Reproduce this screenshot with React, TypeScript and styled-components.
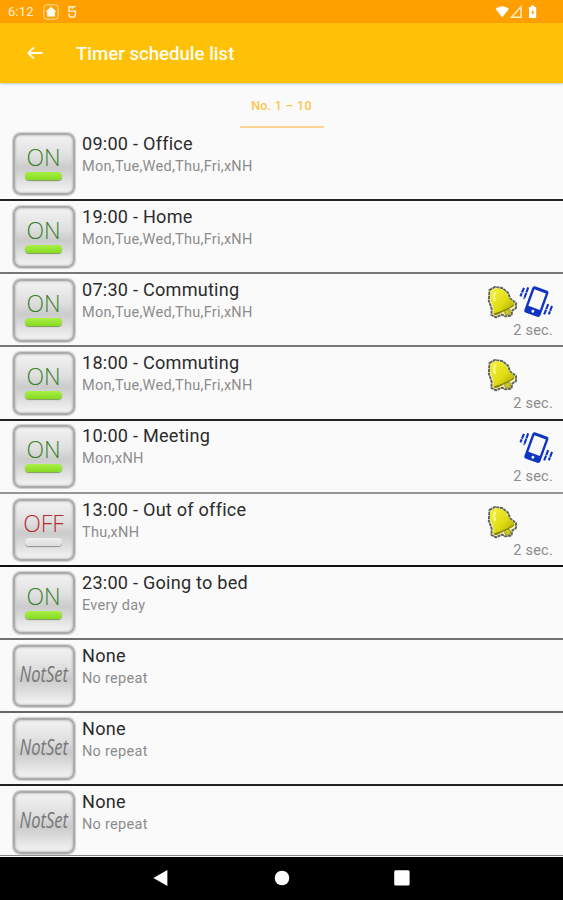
import React from "react";
import styled, { createGlobalStyle } from "styled-components";

const GlobalStyle = createGlobalStyle`
  * { box-sizing: border-box; }
  html, body { margin: 0; padding: 0; background: #fafafa; }
`;

const Screen = styled.div`
  width: 563px;
  height: 900px;
  display: flex;
  flex-direction: column;
  overflow: hidden;
  background: #fafafa;
  font-family: Roboto, sans-serif;
`;

const StatusBar = styled.header`
  flex: none;
  height: 23px;
  padding: 1px 25px 0 8px;
  display: flex;
  align-items: center;
  justify-content: space-between;
  background: #ffa000;
  color: #fff3dc;
`;

const StatusGroup = styled.div`
  display: flex;
  align-items: center;
  gap: 8px;
`;

const Clock = styled.span`
  width: 27px;
  font-size: 13px;
  line-height: 22px;
  letter-spacing: 0.2px;
`;

const AppBar = styled.div`
  flex: none;
  height: 60px;
  padding: 0 0 0 25px;
  display: flex;
  align-items: center;
  background: #ffc107;
  box-shadow: 0 1px 2px rgba(0, 0, 0, 0.22);
  color: #fffdf0;
`;

const Title = styled.h1`
  margin: 2px 0 0 31px;
  font-size: 18.6px;
  font-weight: 500;
  line-height: 24px;
`;

const TabStrip = styled.nav`
  flex: none;
  height: 45px;
  display: flex;
  justify-content: center;
`;

const Tab = styled.div`
  width: 84px;
  height: 45px;
  padding-top: 14px;
  border-bottom: 2px solid #ffd494;
  text-align: center;
  white-space: nowrap;
  font-size: 12.4px;
  font-weight: 500;
  line-height: 18px;
  letter-spacing: 0.3px;
  color: #fcc54a;
`;

const List = styled.ul`
  flex: none;
  height: 728.5px;
  margin: 0;
  padding: 0;
  list-style: none;
`;

const Row = styled.li<{ $line: string }>`
  height: 73.15px;
  padding: 4.8px 10px 0 12.5px;
  display: flex;
  border-bottom: 2px solid ${(p) => p.$line};

  &:last-child {
    height: 70.2px;
    border-bottom-width: 1px;
  }
`;

const StateButton = styled.button`
  flex: none;
  width: 62px;
  height: 62.5px;
  padding: 0;
  border: 2.5px solid #ababab;
  border-radius: 8px;
  display: flex;
  flex-direction: column;
  align-items: center;
  background: linear-gradient(#f3f3f3 0%, #dedede 38%, #cbcbcb 56%, #dcdcdc 75%, #f5f5f5 100%);
  box-shadow: 0 0 1px 0.5px #cccccc, inset 0 0 2px 1px #c8c8c8;
`;

const StateText = styled.span<{ $on: boolean }>`
  margin-top: 7px;
  height: 30px;
  font-family: "Open Sans", sans-serif;
  font-weight: 300;
  font-size: 23px;
  line-height: 31px;
  color: ${(p) => (p.$on ? "#39802a" : "#b52b2b")};
`;

const Lamp = styled.span<{ $on: boolean }>`
  width: 37px;
  height: 8px;
  border-radius: 4px;
  background: ${(p) => (p.$on ? "linear-gradient(#a9f046, #86da22)" : "linear-gradient(#eeeeee, #dddddd)")};
  box-shadow: 0 1px 1px ${(p) => (p.$on ? "#7d9d58" : "#8e8e8e")};
`;

const NotSetText = styled.span`
  margin-top: 14px;
  font-family: "Open Sans", sans-serif;
  font-style: italic;
  font-size: 21px;
  line-height: 26px;
  color: #777;
  transform: scaleX(0.79);
`;

const Details = styled.div`
  flex: 1;
  padding-left: 7.5px;
  white-space: nowrap;
`;

const Name = styled.div`
  font-size: 18.1px;
  line-height: 22px;
  letter-spacing: 0.24px;
  color: #2b2b2b;
`;

const Days = styled.div`
  font-size: 14.5px;
  line-height: 24px;
  letter-spacing: 0.28px;
  color: #8c8c8c;
`;

const Alerts = styled.div`
  width: 70px;
  padding-top: 5px;
`;

const AlertIcons = styled.div`
  height: 36px;
  display: flex;
  justify-content: space-between;
`;

const IconSlot = styled.span`
  width: 35px;
  height: 36px;
  display: block;
`;

const Duration = styled.div`
  text-align: right;
  font-size: 14.5px;
  line-height: 22px;
  letter-spacing: 0.25px;
  color: #8c8c8c;
`;

const NavBar = styled.footer`
  flex: 1;
  display: flex;
  justify-content: center;
  align-items: center;
  gap: 96.5px;
  background: #000;
`;

const HomeBadge = () => (
  <svg width="16" height="16" viewBox="0 0 16 16">
    <rect x="0.8" y="0.8" width="14.4" height="14.4" rx="3" fill="none" stroke="#ffe0a5" strokeWidth="1" />
    <path d="M8 3 12.9 7.4H11.6V12.2H4.4V7.4H3.1Z" fill="#fffaf0" stroke="#fffaf0" strokeWidth="0.8" strokeLinejoin="round" />
  </svg>
);

const SyncMark = () => (
  <svg width="11" height="14" viewBox="0 0 11 14">
    <path d="M8.6 1.8H2V6.2H8.4V9.4Q8.4 12.2 5.2 12.2Q2 12.2 2 9.4V8.4M5.2 1.8V4" fill="none" stroke="#ffedcb" strokeWidth="1.5" />
  </svg>
);

const StatusIcons = () => (
  <svg width="43" height="14" viewBox="0 0 43 14">
    <path d="M0.5 3.8Q7.2-1.2 14 3.8L7.2 12.5Z" fill="#fff" />
    <path d="M26 1.8V12.2H16.4Z" fill="none" stroke="#fff0d2" strokeWidth="1.4" />
    <path d="M34 2H36V0.6H39.2V2H41.2V13H34Z" fill="#fff" />
    <path d="M38.2 4.6 36.2 8H37.4V10.2L39.2 7H38.2Z" fill="#ffa000" />
  </svg>
);

const BackArrow = () => (
  <svg width="20" height="18" viewBox="0 0 20 18">
    <path d="M17.5 9H3.2M8.9 3.3 3.2 9l5.7 5.7" fill="none" stroke="#fffdf0" strokeWidth="1.8" />
  </svg>
);

const Bell = () => (
  <svg width="35" height="36" viewBox="0 0 35 36">
    <defs>
      <linearGradient id="bellBody" x1="0" y1="0" x2="1" y2="1">
        <stop offset="0" stopColor="#f6f238" />
        <stop offset="0.55" stopColor="#dfdc14" />
        <stop offset="1" stopColor="#a09b00" />
      </linearGradient>
    </defs>
    <path
      d="M6.5 6 12 2.9 19 4 25 8.6 27 14.4 33 19 33 24 29.4 26.6 28.4 31.6 22.5 32.4 19 30.6 13 33.4 8.4 31 8.6 24.6 5.8 16.6Z"
      fill="#f0eebc"
      stroke="#606056"
      strokeWidth="1.9"
      strokeLinejoin="round"
      strokeDasharray="3.2 0.6"
    />
    <circle cx="24.6" cy="28" r="3" fill="#cfca20" stroke="#77731a" strokeWidth="0.6" />
    <path d="M7.4 8.5Q8 5.4 13 4.5Q19.5 4 23.4 9Q24.4 13.8 31 18.4Q32.4 20.6 29 22.5L15 30.2Q10.2 32 10.2 28.4Q11.4 23.6 8.2 18Q6.2 12 7.4 8.5Z" fill="url(#bellBody)" />
    <path d="M10.6 29.4Q21 27.4 31.4 20.2Q31.4 22 28.4 23.4L14.6 30.6Q11.4 31.6 10.6 29.4Z" fill="#817d08" />
    <path d="M12.4 8.4Q10 11.6 12 16.2" fill="none" stroke="#fbf9a0" strokeWidth="2" strokeLinecap="round" />
  </svg>
);

const Phone = () => (
  <svg width="35" height="36" viewBox="0 0 35 36">
    <g transform="rotate(20 17.5 18)">
      <rect x="9.7" y="3.4" width="17" height="28" rx="2.6" fill="#0e34c0" />
      <rect x="12.1" y="6.4" width="12.2" height="17.6" fill="#fafafa" />
      <circle cx="18.2" cy="27.6" r="1.5" fill="#e9efff" />
    </g>
    <path d="M6 3.9 2.4 12.4M10.2 3.4 6 15M30.2 20.2 26 30.9M34 21.9 30.8 30.4" fill="none" stroke="#0e34c0" strokeWidth="2.1" strokeDasharray="5.2 0.6" />
  </svg>
);

const NavButtons = () => (
  <>
    <svg width="24" height="24" viewBox="0 0 24 24"><path d="M18.4 4V20L4.4 12Z" fill="#fff" /></svg>
    <svg width="24" height="24" viewBox="0 0 24 24"><circle cx="12" cy="12" r="7.3" fill="#fff" /></svg>
    <svg width="24" height="24" viewBox="0 0 24 24"><rect x="4.2" y="4.2" width="15.4" height="15.4" rx="1.5" fill="#fff" /></svg>
  </>
);

type State = "on" | "off" | "unset";
interface Timer {
  name: string;
  days: string;
  state: State;
  line: string;
  bell?: boolean;
  vibrate?: boolean;
}

const timers: Timer[] = [
  { name: "09:00 - Office", days: "Mon,Tue,Wed,Thu,Fri,xNH", state: "on", line: "#222" },
  { name: "19:00 - Home", days: "Mon,Tue,Wed,Thu,Fri,xNH", state: "on", line: "#777" },
  { name: "07:30 - Commuting", days: "Mon,Tue,Wed,Thu,Fri,xNH", state: "on", line: "#777", bell: true, vibrate: true },
  { name: "18:00 - Commuting", days: "Mon,Tue,Wed,Thu,Fri,xNH", state: "on", line: "#222", bell: true },
  { name: "10:00 - Meeting", days: "Mon,xNH", state: "on", line: "#969696", vibrate: true },
  { name: "13:00 - Out of office", days: "Thu,xNH", state: "off", line: "#111", bell: true },
  { name: "23:00 - Going to bed", days: "Every day", state: "on", line: "#707070" },
  { name: "None", days: "No repeat", state: "unset", line: "#666" },
  { name: "None", days: "No repeat", state: "unset", line: "#222" },
  { name: "None", days: "No repeat", state: "unset", line: "#888" },
];

const TimerRow = ({ timer }: { timer: Timer }) => (
  <Row $line={timer.line}>
    <StateButton>
      {timer.state === "unset" ? (
        <NotSetText>NotSet</NotSetText>
      ) : (
        <>
          <StateText $on={timer.state === "on"}>{timer.state === "on" ? "ON" : "OFF"}</StateText>
          <Lamp $on={timer.state === "on"} />
        </>
      )}
    </StateButton>
    <Details>
      <Name>{timer.name}</Name>
      <Days>{timer.days}</Days>
    </Details>
    {(timer.bell || timer.vibrate) && (
      <Alerts>
        <AlertIcons>
          <IconSlot>{timer.bell && <Bell />}</IconSlot>
          <IconSlot>{timer.vibrate && <Phone />}</IconSlot>
        </AlertIcons>
        <Duration>2 sec.</Duration>
      </Alerts>
    )}
  </Row>
);

export default function App() {
  return (
    <>
      <GlobalStyle />
      <Screen>
        <StatusBar>
          <StatusGroup>
            <Clock>6:12</Clock>
            <HomeBadge />
            <SyncMark />
          </StatusGroup>
          <StatusIcons />
        </StatusBar>
        <AppBar>
          <BackArrow />
          <Title>Timer schedule list</Title>
        </AppBar>
        <TabStrip>
          <Tab>No. 1 – 10</Tab>
        </TabStrip>
        <List>
          {timers.map((timer, i) => (
            <TimerRow key={i} timer={timer} />
          ))}
        </List>
        <NavBar>
          <NavButtons />
        </NavBar>
      </Screen>
    </>
  );
}
